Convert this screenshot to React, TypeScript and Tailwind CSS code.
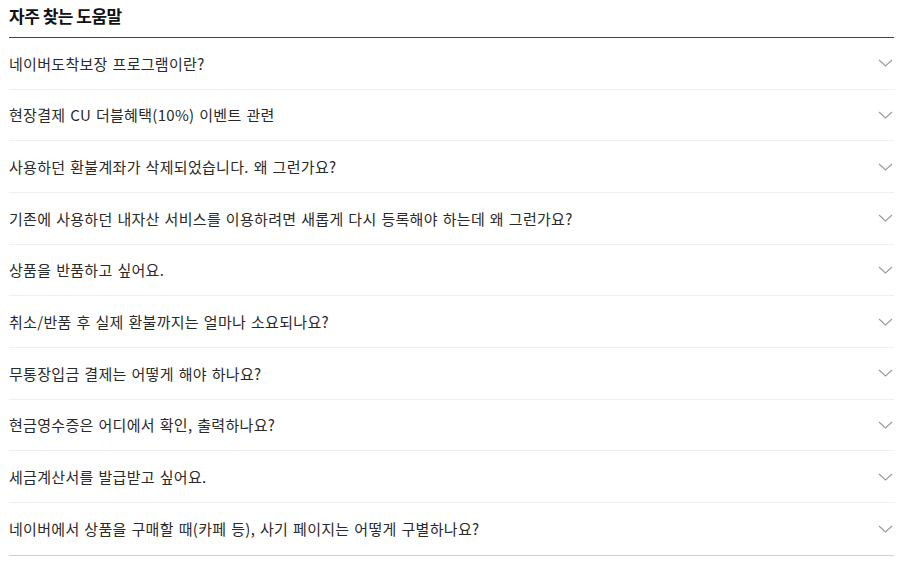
import React from 'react';

const FAQS = [
  '네이버도착보장 프로그램이란?',
  '현장결제 CU 더블혜택(10%) 이벤트 관련',
  '사용하던 환불계좌가 삭제되었습니다. 왜 그런가요?',
  '기존에 사용하던 내자산 서비스를 이용하려면 새롭게 다시 등록해야 하는데 왜 그런가요?',
  '상품을 반품하고 싶어요.',
  '취소/반품 후 실제 환불까지는 얼마나 소요되나요?',
  '무통장입금 결제는 어떻게 해야 하나요?',
  '현금영수증은 어디에서 확인, 출력하나요?',
  '세금계산서를 발급받고 싶어요.',
  '네이버에서 상품을 구매할 때(카페 등), 사기 페이지는 어떻게 구별하나요?',
];

const Chevron = () => (
  <svg width="15" height="8" viewBox="0 0 15 8" fill="none" className="shrink-0">
    <path d="M1 1l6.5 6L14 1" stroke="#9a9a9a" strokeWidth="1.1" />
  </svg>
);

export default function App() {
  return (
    <div
      className="w-[903px] h-[569px] bg-white px-[9px] text-[#2a2a2a]"
      style={{ fontFamily: '"Noto Sans CJK KR", "Noto Sans", sans-serif' }}
    >
      {/* title */}
      <h2 className="h-[38px] pt-[3px] text-[17px] font-bold text-[#111] tracking-[-0.5px] leading-[26px] border-b border-[#444]">
        자주 찾는 도움말
      </h2>

      <ul className="border-b border-[#d0d0d0] w-[885px]">
        {FAQS.map((q, i) => (
          <li
            key={i}
            className={`h-[51.67px] flex items-center justify-between pr-[1px] ${
              i < FAQS.length - 1 ? 'border-b border-[#f0f0f0]' : ''
            }`}
          >
            <span className="text-[15px] tracking-[0.3px] [word-spacing:1.2px] leading-none">{q}</span>
            <Chevron />
          </li>
        ))}
      </ul>
    </div>
  );
}
